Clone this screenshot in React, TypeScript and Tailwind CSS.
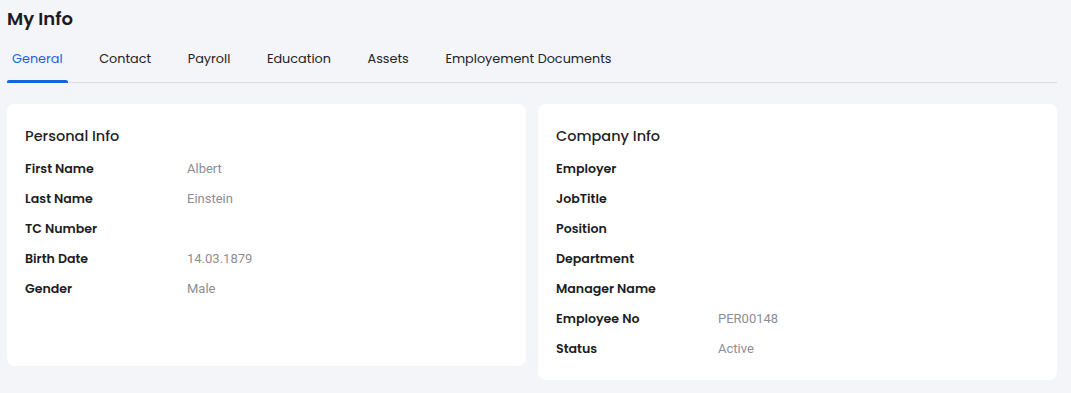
import { useState } from "react";

const tabs = ["General", "Contact", "Payroll", "Education", "Assets", "Employement Documents"];

const personal: [string, string][] = [
  ["First Name", "Albert"],
  ["Last Name", "Einstein"],
  ["TC Number", ""],
  ["Birth Date", "14.03.1879"],
  ["Gender", "Male"],
];

const company: [string, string][] = [
  ["Employer", ""],
  ["JobTitle", ""],
  ["Position", ""],
  ["Department", ""],
  ["Manager Name", ""],
  ["Employee No", "PER00148"],
  ["Status", "Active"],
];

function InfoCard({ title, rows, className }: { title: string; rows: [string, string][]; className?: string }) {
  return (
    <div className={"bg-white rounded-[8px] px-[18px] pt-[18px] pb-4 " + (className ?? "")}>
      <h3 className="text-[14.5px] font-medium leading-[28px] text-[#1f1f24] mb-[4px]">{title}</h3>
      {rows.map(([label, value]) => (
        <div key={label} className="flex items-center h-[30px]">
          <div className="w-[162px] text-[12.6px] font-semibold text-[#1c1c22]">{label}</div>
          <div className="text-[13px] text-[#8d8d93] font-['Roboto',sans-serif]">{value}</div>
        </div>
      ))}
    </div>
  );
}

export default function App() {
  const [active, setActive] = useState("General");

  return (
    <div className="min-h-[393px] bg-[#f4f5f9] pl-[7px] pr-[14px] font-['Poppins','Inter',sans-serif]">
      <h1 className="pt-[5px] text-[18px] leading-[27px] font-semibold text-[#1a1a1f]">My Info</h1>

      {/* タブ */}
      <div className="mt-[3px] flex gap-[26.6px] border-b border-[#dcdde3]">
        {tabs.map((tab) => (
          <button
            key={tab}
            onClick={() => setActive(tab)}
            className={
              "relative h-[47px] px-[5px] text-[12.8px] " +
              (active === tab ? "text-[#2462d8]" : "text-[#222226]")
            }
          >
            {tab}
            {active === tab && (
              <span className="absolute left-0 right-0 bottom-[-1px] h-[3px] rounded-t-[2px] bg-[#1a62e0]" />
            )}
          </button>
        ))}
      </div>

      <div className="mt-[21px] grid grid-cols-2 gap-[12px] items-start">
        <InfoCard title="Personal Info" rows={personal} className="h-[262px]" />
        <InfoCard title="Company Info" rows={company} />
      </div>
    </div>
  );
}
